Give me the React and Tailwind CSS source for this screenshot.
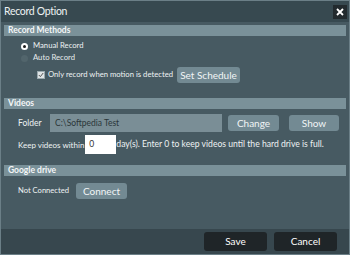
import React from 'react';

function SectionHeader({ children }) {
  return (
    <div className="h-[11px] bg-[#7a9199] flex items-center pl-[4px] text-[8.5px] font-bold text-[#f4f6f7] leading-none">
      {children}
    </div>
  );
}

function Btn({ children, className = '' }) {
  return (
    <div className={`flex items-center justify-center rounded-[3px] bg-[#738a93] text-[#f1f5f6] text-[10px] leading-none ${className}`}>
      {children}
    </div>
  );
}

export default function App() {
  return (
    <div className="w-[350px] h-[255px] bg-[#6b7f87] p-px overflow-hidden" style={{ fontFamily: 'Lato, "Noto Sans", sans-serif' }}>
      <div className="w-full h-full flex flex-col bg-[#475a62] text-white">
        <div className="h-[21px] shrink-0 bg-[#374950] flex items-center justify-between pl-[3px] pr-[2px]">
          <span className="text-[10.5px] tracking-[-0.3px] text-[#eef2f3]">Record Option</span>
          <div className="w-[14px] h-[14px] bg-[#222a2e] flex items-center justify-center">
            <svg width="8" height="8" viewBox="0 0 8 8">
              <path d="M1 1 L7 7 M7 1 L1 7" stroke="#ffffff" strokeWidth="1.8" />
            </svg>
          </div>
        </div>

        <div className="flex-1 flex flex-col px-[3px] pt-[3px]">
          <SectionHeader>Record Methods</SectionHeader>
          <div className="flex items-center h-[12px] mt-[4px] pl-[17px] text-[7.7px] text-[#eef2f3]">
            <span className="w-[7px] h-[7px] rounded-full bg-white flex items-center justify-center mr-[5px]">
              <span className="w-[3px] h-[3px] rounded-full bg-[#1c1c1c]" />
            </span>
            Manual Record
          </div>
          <div className="flex items-center h-[12px] pl-[17px] text-[7.7px] text-[#e6ebec]">
            <span className="w-[7px] h-[7px] rounded-full bg-[#52656c] mr-[5px]" />
            Auto Record
          </div>
          <div className="flex items-center h-[17px] mt-[2px] pl-[33px] text-[7.7px] text-[#eef2f3]">
            <span className="w-[8px] h-[8px] bg-[#dfe4e6] border border-[#9aa9ae] flex items-center justify-center mr-[3px]">
              <svg width="6" height="6" viewBox="0 0 6 6">
                <path d="M0.8 3 L2.4 4.6 L5.2 1" stroke="#555" strokeWidth="1" fill="none" />
              </svg>
            </span>
            <span>Only record when motion is detected</span>
            <Btn className="ml-[4px] w-[63px] h-[16px] text-[9.5px]">Set Schedule</Btn>
          </div>

          <div className="mt-[15px]">
            <SectionHeader>Videos</SectionHeader>
          </div>
          <div className="flex items-center h-[18px] mt-[5px] pl-[14px] text-[8.5px] text-[#eef2f3]">
            <span className="w-[32px]">Folder</span>
            <div className="w-[172px] h-[18px] bg-[#7a8e96] flex items-center pl-[5px] text-[8.5px] text-[#2b3639]">C:\Softpedia Test</div>
            <Btn className="ml-[6px] w-[51px] h-[16px]">Change</Btn>
            <Btn className="ml-[10px] w-[50px] h-[16px]">Show</Btn>
          </div>
          <div className="flex items-center h-[19px] mt-[3px] pl-[14px] text-[8px] text-[#eef2f3] whitespace-nowrap">
            <span>Keep videos within</span>
            <div className="w-[31px] h-[19px] bg-white ml-[1px] flex items-center pl-[4px] text-[8.5px] text-[#333]">0</div>
            <span className="text-[8.6px]">day(s). Enter 0 to keep videos until the hard drive is full.</span>
          </div>

          <div className="mt-[11px]">
            <SectionHeader>Google drive</SectionHeader>
          </div>
          <div className="flex items-center h-[16px] mt-[7px] pl-[14px] text-[7.6px] text-[#eef2f3]">
            <span>Not Connected</span>
            <Btn className="ml-[7px] w-[51px] h-[16px]">Connect</Btn>
          </div>
        </div>

        <div className="h-[25px] shrink-0 bg-[#37474e] flex items-center justify-end pr-[12px] gap-[7px]">
          <div className="w-[63px] h-[19px] rounded-[3px] bg-[#1f2528] flex items-center justify-center text-[10px] text-white">Save</div>
          <div className="w-[63px] h-[19px] rounded-[3px] bg-[#1f2528] flex items-center justify-center text-[10px] text-white">Cancel</div>
        </div>
      </div>
    </div>
  );
}
